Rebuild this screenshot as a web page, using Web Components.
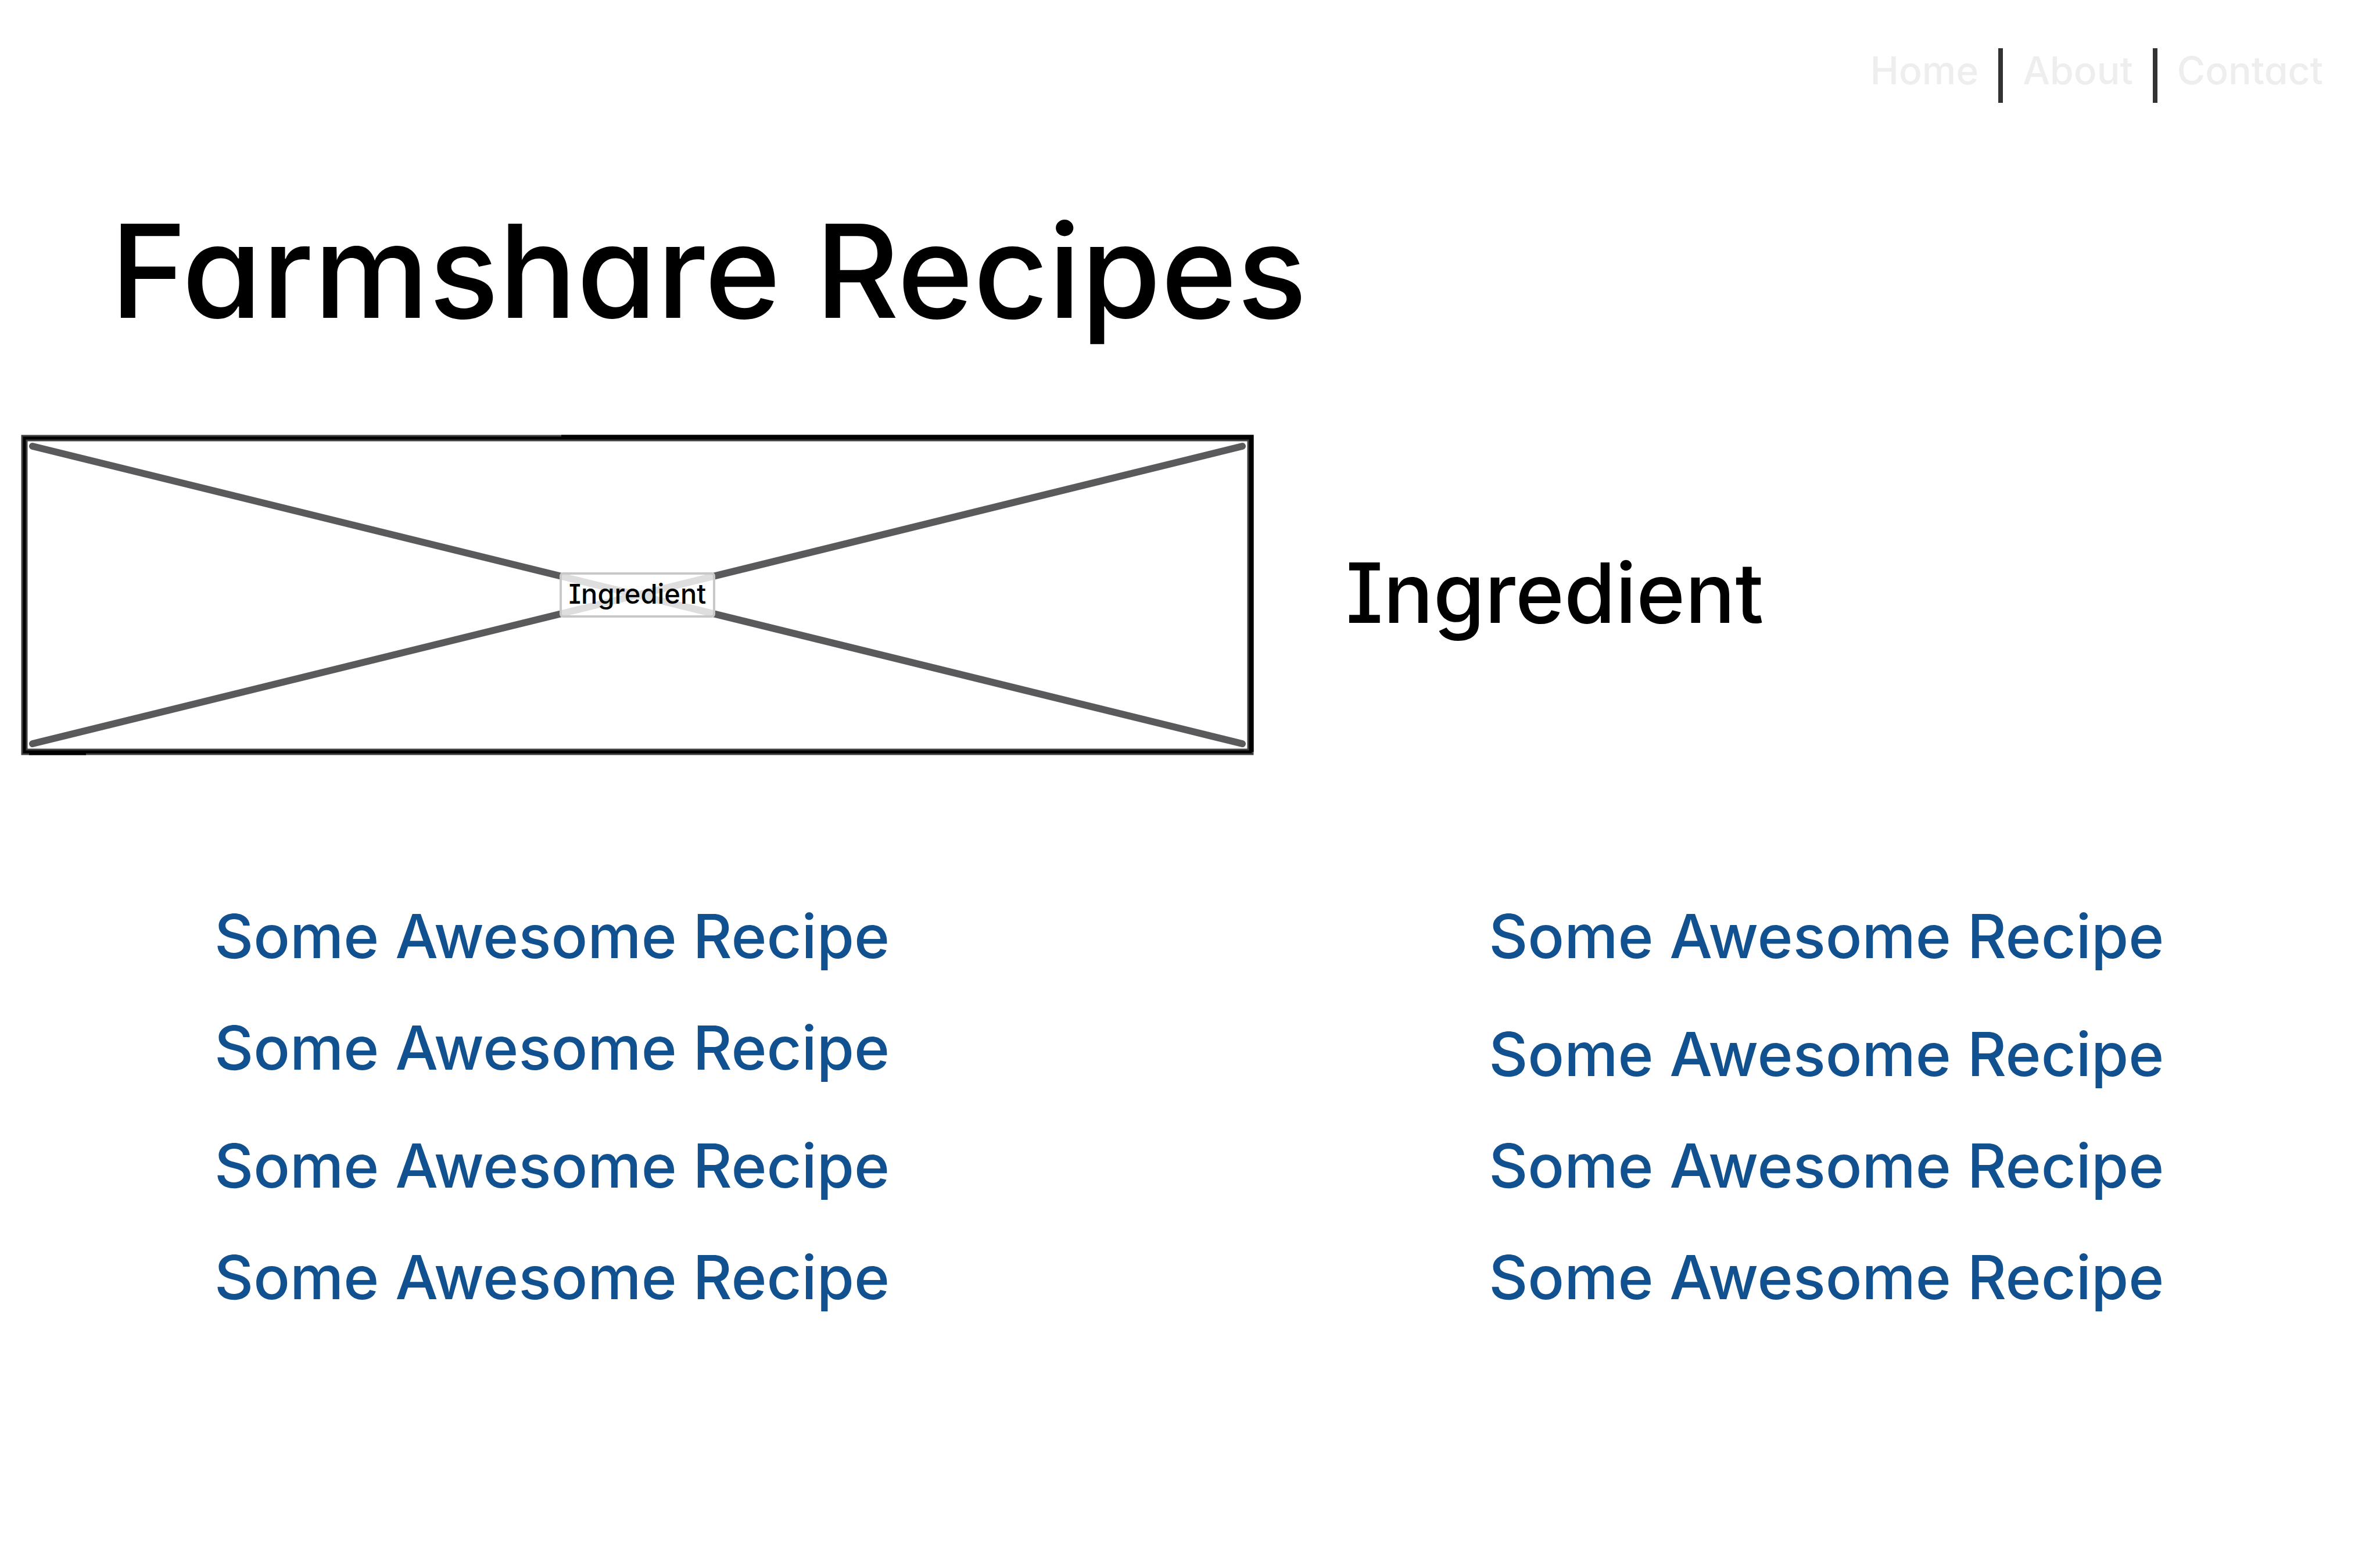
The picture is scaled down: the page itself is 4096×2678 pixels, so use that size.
<!DOCTYPE html>
<html lang="en">
<head>
<meta charset="utf-8">
<title>Farmshare Recipes</title>
<style>
body { margin: 0; background: #fff; color: #000; font-family: Inter, "Liberation Sans", sans-serif; font-weight: 500; font-feature-settings: "cv11", "cv08"; }
</style>
</head>
<body>
<farm-page></farm-page>
<script>
const define = (name, html) => customElements.define(name, class extends HTMLElement {
  constructor() {
    super();
    this.attachShadow({ mode: "open" }).innerHTML = html;
  }
});

define("nav-bar", `
<style>
:host { display: block; }
nav { display: flex; justify-content: flex-end; align-items: flex-start; padding: 83px 98px 0 0; height: 94px; gap: 34px; }
::slotted(a) { color: #eee; text-decoration: none; font-size: 66px; line-height: 76px; }
::slotted(hr) { width: 8px; height: 94px; margin: 0; border: 0; background: #333; }
</style>
<nav><slot></slot></nav>`);

define("image-placeholder", `
<style>
:host { display: grid; place-items: center; }
svg { grid-area: 1 / 1; width: 100%; height: auto; display: block; }
span { grid-area: 1 / 1; z-index: 1; box-sizing: border-box; border: 4px solid #c8c8c8; border-radius: 6px; background: rgba(255,255,255,.8); padding: 0 12px 4px; font-size: 47px; line-height: 66px; }
</style>
<svg viewBox="0 0 2122 552" aria-hidden="true">
<g fill="none">
<path d="M20 20L2102 532M20 532L2102 20" stroke="#5a5a5c" stroke-width="12" stroke-linecap="round"/>
<path d="M6 6H2116V546H6Z" stroke="#404040" stroke-width="11"/>
<path d="M6 6H2116V546H6Z" stroke="#000" stroke-width="5"/>
<path d="M930 4H2118V546M14 548H112" stroke="#000" stroke-width="7"/>
</g>
</svg>
<span><slot></slot></span>`);

define("recipe-list", `
<style>
:host { display: block; }
ul { list-style: none; margin: 0; padding: 0; display: flex; flex-direction: column; }
::slotted(li) { height: 192px; line-height: 120px; font-size: 104px; }
::slotted(li.wide) { height: 203px; }
</style>
<ul><slot></slot></ul>`);

define("recipe-link", `
<style>
:host { display: inline; }
a { color: #11518f; text-decoration: none; white-space: nowrap; }
</style>
<a href="#recipe"><slot></slot></a>`);

define("farm-page", `
<style>
:host { display: block; }
h1, h2 { margin: 0; font-weight: 500; white-space: nowrap; }
h1 { font-size: 223px; line-height: 270px; padding: 154px 0 0 190px; }
h2 { font-size: 143px; line-height: 180px; padding-bottom: 8px; }
.hero { display: grid; grid-template-columns: 2122fr 1780fr; align-items: center; gap: 158px; padding: 147px 0 0 36px; }
.recipes { display: grid; grid-template-columns: 2192fr 1533fr; padding: 251px 0 0 369px; }
li { display: block; }
</style>
<nav-bar><a href="#home">Home</a><hr><a href="#about">About</a><hr><a href="#contact">Contact</a></nav-bar>
<main>
<h1>Farmshare Recipes</h1>
<section class="hero">
<image-placeholder>Ingredient</image-placeholder>
<h2>Ingredient</h2>
</section>
<section class="recipes">
<recipe-list>
<li><recipe-link>Some Awesome Recipe</recipe-link></li>
<li class="wide"><recipe-link>Some Awesome Recipe</recipe-link></li>
<li><recipe-link>Some Awesome Recipe</recipe-link></li>
<li><recipe-link>Some Awesome Recipe</recipe-link></li>
</recipe-list>
<recipe-list>
<li class="wide"><recipe-link>Some Awesome Recipe</recipe-link></li>
<li><recipe-link>Some Awesome Recipe</recipe-link></li>
<li><recipe-link>Some Awesome Recipe</recipe-link></li>
<li><recipe-link>Some Awesome Recipe</recipe-link></li>
</recipe-list>
</section>
</main>`);
</script>
</body>
</html>
